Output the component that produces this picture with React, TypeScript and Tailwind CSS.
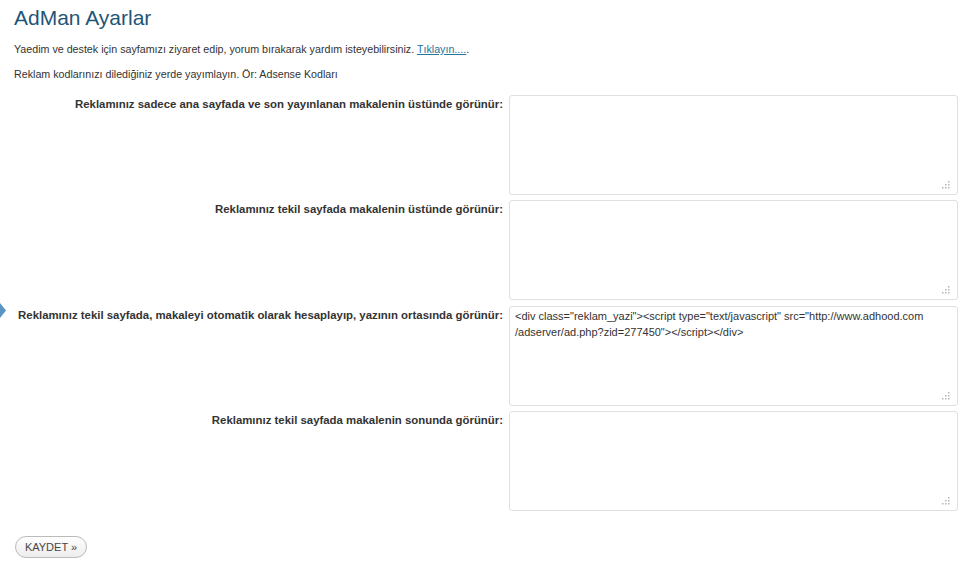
import { useState } from "react";

type Field = {
  id: string;
  label: string;
  value: string;
};

const fields: Field[] = [
  { id: "ana_ust", label: "Reklamınız sadece ana sayfada ve son yayınlanan makalenin üstünde görünür:", value: "" },
  { id: "tekil_ust", label: "Reklamınız tekil sayfada makalenin üstünde görünür:", value: "" },
  {
    id: "tekil_orta",
    label: "Reklamınız tekil sayfada, makaleyi otomatik olarak hesaplayıp, yazının ortasında görünür:",
    value:
      '<div class="reklam_yazi"><script type="text/javascript" src="http://www.adhood.com\n/adserver/ad.php?zid=277450"></script></div>',
  },
  { id: "tekil_son", label: "Reklamınız tekil sayfada makalenin sonunda görünür:", value: "" },
];

const Grip = () => (
  <svg className="pointer-events-none absolute bottom-[6px] right-[8px]" width="9" height="9" viewBox="0 0 9 9">
    <g fill="#b5b5b5">
      <rect x="7" y="1" width="1.5" height="1.5" />
      <rect x="4" y="4" width="1.5" height="1.5" />
      <rect x="7" y="4" width="1.5" height="1.5" />
      <rect x="1" y="7" width="1.5" height="1.5" />
      <rect x="4" y="7" width="1.5" height="1.5" />
      <rect x="7" y="7" width="1.5" height="1.5" />
    </g>
  </svg>
);

const App = () => {
  const [values, setValues] = useState<Record<string, string>>(
    Object.fromEntries(fields.map((f) => [f.id, f.value]))
  );

  return (
    <div className="relative min-h-[564px] w-[972px] bg-white font-['Liberation_Sans',Arial,sans-serif] text-[#333]">
      {/* admin menu pointer */}
      <svg className="absolute left-0 top-[303px]" width="6" height="15" viewBox="0 0 6 15">
        <path d="M0 0 L6 7.5 L0 15 Z" fill="#5b95c4" />
      </svg>

      <div className="px-[14px] pt-[3px]">
        <h2 className="text-[21px] leading-[29px] font-normal text-[#1f5577]">AdMan Ayarlar</h2>

        <p className="mt-[10px] text-[10.7px] leading-[14px]">
          Yaedim ve destek için sayfamızı ziyaret edip, yorum bırakarak yardım isteyebilirsiniz.{" "}
          <a href="#" className="text-[#21759b] underline">
            Tıklayın....
          </a>
          .
        </p>
        <p className="mt-[11px] text-[10.7px] leading-[14px]">Reklam kodlarınızı dilediğiniz yerde yayımlayın. Ör: Adsense Kodları</p>
      </div>

      <form className="mt-[14px] flex flex-col gap-[5.3px]" onSubmit={(e) => e.preventDefault()}>
        {fields.map((f) => (
          <div key={f.id} className="flex">
            <label
              htmlFor={f.id}
              className="w-[503px] shrink-0 pt-[2px] text-right text-[11.4px] leading-[14px] font-bold text-[#333]"
            >
              {f.label}
            </label>
            <div className="relative ml-[6px]">
              <textarea
                id={f.id}
                value={values[f.id]}
                onChange={(e) => setValues({ ...values, [f.id]: e.target.value })}
                className="block h-[100px] w-[449px] resize-none rounded-[3px] border border-[#dfdfdf] bg-white px-[5px] py-[1px] text-[11px] leading-[16px] text-[#333] outline-none"
              />
              <Grip />
            </div>
          </div>
        ))}

        <div className="mt-[18px] pl-[15px]">
          <button
            type="submit"
            className="h-[22px] w-[72px] rounded-full border border-[#bbb] bg-gradient-to-b from-white to-[#ededed] text-[11px] text-[#464646]"
          >
            KAYDET »
          </button>
        </div>
      </form>
    </div>
  );
};

export default App;
